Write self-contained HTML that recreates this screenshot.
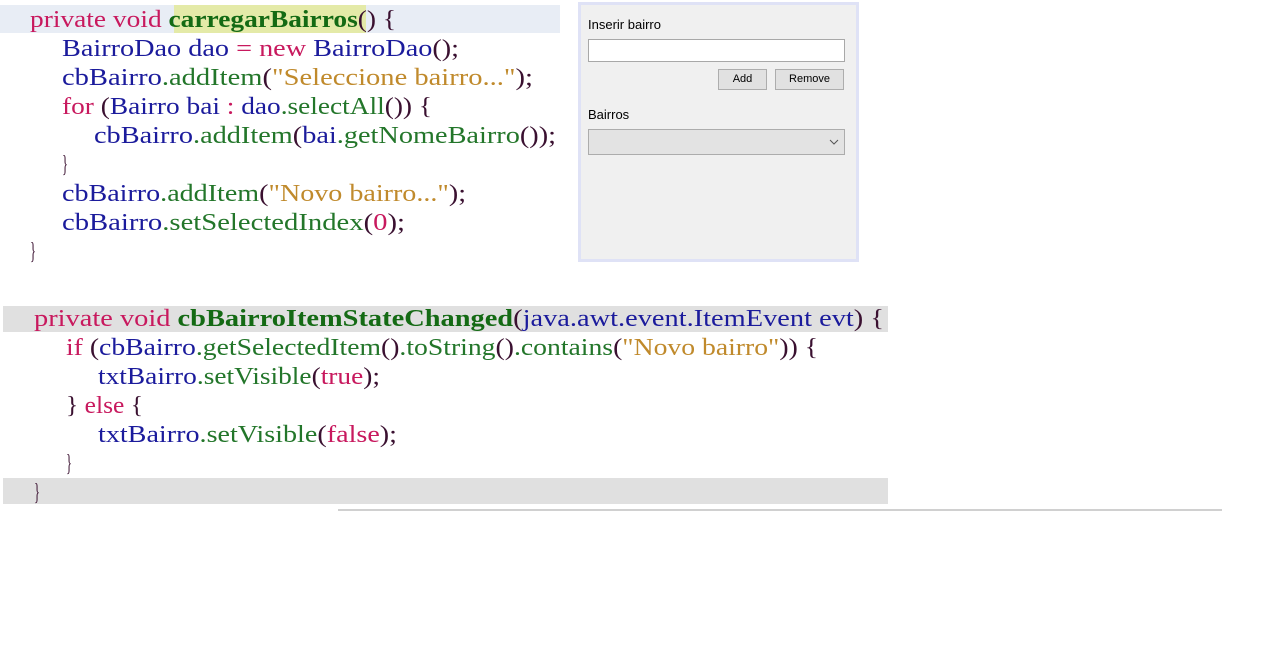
<!DOCTYPE html>
<html><head><meta charset="utf-8"><style>
body{margin:0;width:1283px;height:660px;background:#fff;position:relative;overflow:hidden;font-family:"Liberation Serif",serif;}
.l{position:absolute;white-space:pre;font-size:24px;line-height:29px;transform-origin:0 50%;}
.k{color:#c8195e}.b{color:#1b1b9c}.g{color:#23762a}.s{color:#c08a2c}.p{color:#3a1030}
.m{color:#146a14;font-weight:bold}
.ui{font-family:"Liberation Sans",sans-serif;position:absolute;color:#000}
</style></head><body>
<div style="position:absolute;left:0;top:5px;width:560px;height:28px;background:#e8edf5"></div>
<div style="position:absolute;left:174px;top:5px;width:192px;height:28px;background:#e4eaa8"></div>
<div style="position:absolute;left:3px;top:306px;width:885px;height:26px;background:#e0e0e0"></div>
<div style="position:absolute;left:3px;top:478px;width:885px;height:26px;background:#e0e0e0"></div>
<div style="position:absolute;left:338px;top:509px;width:884px;height:2px;background:#d0d0d0"></div>

<div class="l" style="left:30px;top:6px"><span class="k">private void </span><span class="m">carregarBairros</span><span class="p">() {</span></div>
<div class="l" style="left:62px;top:35px"><span class="b">BairroDao dao </span><span class="k">=</span><span class="k"> new </span><span class="b">BairroDao</span><span class="p">();</span></div>
<div class="l" style="left:62px;top:64px"><span class="b">cbBairro</span><span class="g">.addItem</span><span class="p">(</span><span class="s">"Seleccione bairro..."</span><span class="p">);</span></div>
<div class="l" style="left:62px;top:93px"><span class="k">for </span><span class="p">(</span><span class="b">Bairro bai </span><span class="k">: </span><span class="b">dao</span><span class="g">.selectAll</span><span class="p">()) {</span></div>
<div class="l" style="left:94px;top:122px"><span class="b">cbBairro</span><span class="g">.addItem</span><span class="p">(</span><span class="b">bai</span><span class="g">.getNomeBairro</span><span class="p">());</span></div>
<div class="l" style="left:62px;top:151px"><span class="p">}</span></div>
<div class="l" style="left:62px;top:180px"><span class="b">cbBairro</span><span class="g">.addItem</span><span class="p">(</span><span class="s">"Novo bairro..."</span><span class="p">);</span></div>
<div class="l" style="left:62px;top:209px"><span class="b">cbBairro</span><span class="g">.setSelectedIndex</span><span class="p">(</span><span class="k">0</span><span class="p">);</span></div>
<div class="l" style="left:30px;top:238px"><span class="p">}</span></div>

<div class="l" style="left:34px;top:305px"><span class="k">private void </span><span class="m">cbBairroItemStateChanged</span><span class="p">(</span><span class="b">java.awt.event.ItemEvent evt</span><span class="p">) {</span></div>
<div class="l" style="left:66px;top:334px"><span class="k">if </span><span class="p">(</span><span class="b">cbBairro</span><span class="g">.getSelectedItem</span><span class="p">()</span><span class="g">.toString</span><span class="p">()</span><span class="g">.contains</span><span class="p">(</span><span class="s">"Novo bairro"</span><span class="p">)) {</span></div>
<div class="l" style="left:98px;top:363px"><span class="b">txtBairro</span><span class="g">.setVisible</span><span class="p">(</span><span class="k">true</span><span class="p">);</span></div>
<div class="l" style="left:66px;top:392px"><span class="p">} </span><span class="k">else </span><span class="p">{</span></div>
<div class="l" style="left:98px;top:421px"><span class="b">txtBairro</span><span class="g">.setVisible</span><span class="p">(</span><span class="k">false</span><span class="p">);</span></div>
<div class="l" style="left:66px;top:450px"><span class="p">}</span></div>
<div class="l" style="left:34px;top:479px"><span class="p">}</span></div>

<div style="position:absolute;left:578px;top:2px;width:275px;height:254px;background:#f0f0f0;border:3px solid #dfe2f6"></div>
<div class="ui" style="left:588px;top:17px;font-size:13px">Inserir bairro</div>
<div style="position:absolute;left:588px;top:39px;width:255px;height:21px;background:#fff;border:1px solid #a8a8a8"></div>
<div class="ui" style="left:718px;top:69px;width:47px;height:19px;background:#e1e1e1;border:1px solid #adadad;font-size:11px;text-align:center;line-height:19px">Add</div>
<div class="ui" style="left:775px;top:69px;width:67px;height:19px;background:#e1e1e1;border:1px solid #adadad;font-size:11px;text-align:center;line-height:19px">Remove</div>
<div class="ui" style="left:588px;top:107px;font-size:13px">Bairros</div>
<div style="position:absolute;left:588px;top:129px;width:255px;height:24px;background:#e3e3e3;border:1px solid #acacac"></div>
<svg style="position:absolute;left:829px;top:138px" width="10" height="8"><path d="M1 2 L5 6 L9 2" fill="none" stroke="#555" stroke-width="1"/></svg>

<script>
var ends=[396,459,533,432,556,68,466,405,36,884,818,380,143,397,72,40];
var ls=document.querySelectorAll('.l');
ls.forEach(function(e,i){var w=e.getBoundingClientRect().width;var t=ends[i]-e.offsetLeft;if(w>0)e.style.transform='scaleX('+(t/w)+')';});
</script>
</body></html>
